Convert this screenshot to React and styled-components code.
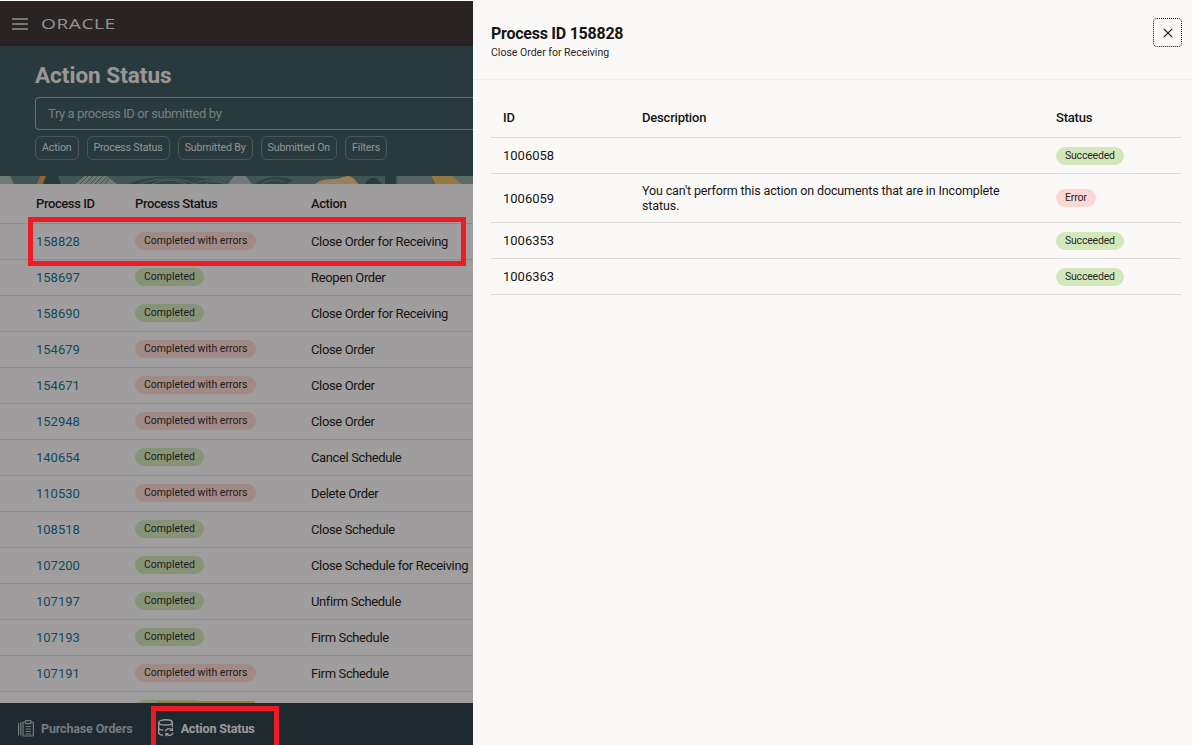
import React from "react";
import styled, { createGlobalStyle } from "styled-components";

const GlobalStyle = createGlobalStyle`
    html, body {
        margin: 0;
        padding: 0;
        background: #fff;
    }
    body {
        font-family: "Roboto", "Noto Sans", sans-serif;
        color: #161513;
    }
`;

const Page = styled.div`
    display: flex;
    width: 1192px;
    height: 745px;
    overflow: hidden;
    position: relative;
`;

const Left = styled.div`
    position: relative;
    display: flex;
    flex-direction: column;
    flex: 0 0 473px;
    height: 745px;
    overflow: hidden;
    padding-top: 1px;
    box-sizing: border-box;
    background: #fff;
`;

const Scrim = styled.div`
    position: absolute;
    inset: 1px 0 0 0;
    background: rgba(22, 21, 19, 0.4);
`;

const TopBar = styled.div`
    display: flex;
    align-items: center;
    gap: 13px;
    flex: 0 0 45px;
    padding-left: 12px;
    background: #36302d;
`;

const Logo = styled.span`
    font-family: "Open Sans", sans-serif;
    font-size: 14.5px;
    font-weight: 400;
    letter-spacing: 0.4px;
    color: #e8e6e4;
    transform: scaleX(1.32);
    transform-origin: left center;
`;

const Hero = styled.div`
    flex: 0 0 130px;
    box-sizing: border-box;
    padding: 15px 0 0 35px;
    background: #36545b;
`;

const Title = styled.h1`
    margin: 0 0 8px;
    font-size: 22.5px;
    line-height: 28px;
    font-weight: 700;
    color: #f1efed;
`;

const SearchBox = styled.div`
    display: flex;
    align-items: center;
    box-sizing: border-box;
    width: 520px;
    height: 33px;
    padding-left: 12px;
    border: 1px solid #9db0b0;
    border-radius: 4px;
    font-size: 13px;
    letter-spacing: -0.4px;
    color: #b9c4c4;
`;

const Chips = styled.div`
    display: flex;
    gap: 8px;
    margin-top: 6px;
`;

const Chip = styled.div`
    display: flex;
    align-items: center;
    box-sizing: border-box;
    height: 24px;
    padding: 0 6px 1px;
    border: 1px solid #6b8183;
    border-radius: 6px;
    font-size: 10.6px;
    letter-spacing: -0.15px;
    color: #dfe6e6;
    white-space: nowrap;
`;

const Strip = styled.svg`
    display: block;
    flex: 0 0 8px;
    width: 473px;
    height: 8px;
`;

const TableArea = styled.div`
    flex: 1;
    min-height: 0;
    overflow: hidden;
    background: #fbf9f8;
`;

const Row = styled.div`
    display: grid;
    grid-template-columns: 99px 176px 1fr;
    align-items: center;
    box-sizing: border-box;
    height: ${(p) => (p.$head ? "40px" : "36px")};
    padding: 0 0 1px 36px;
    border-bottom: 1px solid #dcdad8;
    font-size: 13px;
    white-space: nowrap;
    letter-spacing: ${(p) => (p.$head ? "-0.4px" : "-0.37px")};
    font-weight: ${(p) => (p.$head ? 500 : 400)};
`;

const IdLink = styled.a`
    color: #0f6f96;
    font-size: 13px;
    letter-spacing: 0;
`;

const Pill = styled.span`
    display: inline-flex;
    align-items: center;
    box-sizing: border-box;
    height: 18px;
    padding: 0 9px 1px;
    border-radius: 9px;
    font-size: 10.5px;
    letter-spacing: ${(p) => (p.$tight ? "-0.2px" : "0")};
    color: #2a2623;
    background: ${(p) => (p.$tone === "ok" ? "#d2e8ba" : "#fdd7d2")};
`;

const BottomBar = styled.div`
    position: relative;
    display: flex;
    align-items: center;
    flex: 0 0 42px;
    box-sizing: border-box;
    padding: 8px 0 0 18px;
    background: #233843;
`;

const Tab = styled.div`
    position: relative;
    display: flex;
    align-items: center;
    gap: 7px;
    margin-right: 25px;
    font-size: 12.5px;
    font-weight: 700;
    letter-spacing: -0.15px;
    color: ${(p) => (p.$active ? "#f4f2f0" : "#b4bfc4")};
    &::before {
        content: "";
        display: ${(p) => (p.$active ? "block" : "none")};
        position: absolute;
        left: -1px;
        right: 0;
        top: -18px;
        height: 2px;
        background: #e8c57a;
    }
`;

const Panel = styled.div`
    flex: 1;
    background: #fbf9f8;
    padding-top: 1px;
`;

const PanelHead = styled.div`
    display: flex;
    justify-content: space-between;
    box-sizing: border-box;
    height: 79px;
    padding: 17px 10px 0 18px;
    border-bottom: 1px solid #f0eeec;
`;

const PanelTitle = styled.div`
    font-size: 16px;
    line-height: 32px;
    font-weight: 700;
    letter-spacing: -0.25px;
`;

const PanelSub = styled.div`
    font-size: 10.5px;
    line-height: 6px;
    color: #2a2623;
`;

const CloseBtn = styled.button`
    display: flex;
    align-items: center;
    justify-content: center;
    box-sizing: border-box;
    width: 29px;
    height: 29px;
    padding: 0;
    border: 1px dotted #161513;
    border-radius: 4px;
    background: none;
`;

const DetailTable = styled.div`
    margin: 20px 11px 0 18px;
`;

const DetailRow = styled.div`
    display: grid;
    grid-template-columns: 139px 414px 1fr;
    align-items: center;
    box-sizing: border-box;
    min-height: ${(p) => (p.$head ? "38px" : "36px")};
    padding: 0 0 ${(p) => (p.$head ? "2px" : "0")} 12px;
    border-bottom: 1px solid #dedcda;
    font-size: 13px;
    letter-spacing: ${(p) => (p.$head ? "-0.2px" : "0")};
    font-weight: ${(p) => (p.$head ? 500 : 400)};
`;

const Description = styled.div`
    padding: 9px 0;
    width: 375px;
    font-size: 12.5px;
    line-height: 15px;
    letter-spacing: -0.13px;
`;

const rows = [
    ["158828", "err", "Close Order for Receiving"],
    ["158697", "ok", "Reopen Order"],
    ["158690", "ok", "Close Order for Receiving"],
    ["154679", "err", "Close Order"],
    ["154671", "err", "Close Order"],
    ["152948", "err", "Close Order"],
    ["140654", "ok", "Cancel Schedule"],
    ["110530", "err", "Delete Order"],
    ["108518", "ok", "Close Schedule"],
    ["107200", "ok", "Close Schedule for Receiving"],
    ["107197", "ok", "Unfirm Schedule"],
    ["107193", "ok", "Firm Schedule"],
    ["107191", "err", "Firm Schedule"],
    ["107190", "ok", "Firm Schedule"],
];

const details = [
    ["1006058", "", "Succeeded"],
    ["1006059", "You can't perform this action on documents that are in Incomplete status.", "Error"],
    ["1006353", "", "Succeeded"],
    ["1006363", "", "Succeeded"],
];

const RedBox = styled.div`
    position: absolute;
    box-sizing: border-box;
    border: 5px solid #ed1c24;
    pointer-events: none;
    left: ${(p) => p.$x}px;
    top: ${(p) => p.$y}px;
    width: ${(p) => p.$w}px;
    height: ${(p) => p.$h}px;
`;

function Burger() {
    return (
        <svg width="16" height="12" viewBox="0 0 16 12">
            <path d="M0 1h16M0 6h16M0 11h16" stroke="#e8e6e4" strokeWidth="1.6" />
        </svg>
    );
}

function OrdersIcon() {
    return (
        <svg width="16" height="17" viewBox="0 0 16 17" fill="none" stroke="#b4bfc4" strokeWidth="1.2">
            <path d="M.6 3v12.5M2.8 2v13.5" />
            <rect x="5" y="2" width="10.4" height="14" rx="1" />
            <rect x="7.5" y=".6" width="5.4" height="3" rx=".6" fill="#233843" />
            <path d="M7.5 6.5h5.4M7.5 9h5.4M7.5 11.5h5.4M7.5 14h5.4" />
        </svg>
    );
}

function StatusIcon() {
    return (
        <svg width="16" height="18" viewBox="0 0 16 18" fill="none" stroke="#f4f2f0" strokeWidth="1.4">
            <ellipse cx="7.5" cy="3.4" rx="6.8" ry="2.6" />
            <path d="M.7 3.4v10.4c0 1.3 1.8 2.2 4.3 2.5M14.3 3.4v4.4M.7 8.8c0 1.2 2 2.2 4.6 2.4" />
            <path d="M7.4 12.4a3.6 3.6 0 0 1 6.3-1.4M15 13.6a3.6 3.6 0 0 1-6.3 1.4" />
            <path d="M14.4 8.8v2.6h-2.6M8 17.2v-2.6h2.6" />
        </svg>
    );
}

function CloseIcon() {
    return (
        <svg width="10" height="10" viewBox="0 0 10 10">
            <path d="M.8.8l8.4 8.4M9.2.8L.8 9.2" stroke="#161513" strokeWidth="1.2" />
        </svg>
    );
}

function Leaves() {
    return (
        <Strip viewBox="0 0 473 8" preserveAspectRatio="none">
            <rect width="473" height="8" fill="#5f8180" />
            <path d="M0 0h10l4 8H0z" fill="#a9bdbb" />
            <path d="M40 0h6l-3 8h-6z" fill="#e8954a" />
            <path d="M46 0h12l3 8H43z" fill="#2f5557" />
            <path d="M75 8l10-8h22l10 8z" fill="#a9bdbb" />
            <path d="M80 8l8-8M85 8l8-8M90 8l8-8M95 8l8-8M100 8l8-8M105 8l6-8" stroke="#5f8180" strokeWidth="1" />
            <path d="M128 8c20-10 70-10 107 0z" fill="#3d6466" />
            <path d="M140 8c15-7 40-7 55 0M152 8c10-5 24-5 34 0M195 8c8-5 20-5 34 0M205 8c6-3 12-3 20 0" fill="none" stroke="#6d9291" strokeWidth="1" />
            <path d="M228 8l6-8h12l6 8z" fill="#a9bdbb" />
            <path d="M255 8c8-8 28-9 38-4l-6 4z" fill="#3d6466" />
            <path d="M262 8c6-5 16-5 22-2" fill="none" stroke="#6d9291" strokeWidth="1" />
            <path d="M315 8c4-4 12-5 20-5 6 0 9-3 13-3 5 0 8 6 11 8z" fill="#f0c98a" />
            <path d="M365 8l5-6h6l6 6z" fill="#2f5557" />
            <rect x="385" width="11" height="8" fill="#2f5557" />
            <path d="M397 0h34l3 8h-36z" fill="#7d9a98" />
            <path d="M431 0h22l9 8h-27z" fill="#e8b85f" />
            <path d="M453 0h20v8h-11z" fill="#8ba6a4" />
        </Strip>
    );
}

export default function App() {
    return (
        <Page>
            <GlobalStyle />
            <Left>
                <TopBar>
                    <Burger />
                    <Logo>ORACLE</Logo>
                </TopBar>
                <Hero>
                    <Title>Action Status</Title>
                    <SearchBox>Try a process ID or submitted by</SearchBox>
                    <Chips>
                        {["Action", "Process Status", "Submitted By", "Submitted On", "Filters"].map((c) => (
                            <Chip key={c}>{c}</Chip>
                        ))}
                    </Chips>
                </Hero>
                <Leaves />
                <TableArea>
                    <Row $head>
                        <span>Process ID</span>
                        <span>Process Status</span>
                        <span>Action</span>
                    </Row>
                    {rows.map((r) => (
                        <Row key={r[0]}>
                            <IdLink>{r[0]}</IdLink>
                            <span>
                                <Pill $tone={r[1]}>{r[1] === "ok" ? "Completed" : "Completed with errors"}</Pill>
                            </span>
                            <span>{r[2]}</span>
                        </Row>
                    ))}
                </TableArea>
                <BottomBar>
                    <Tab>
                        <OrdersIcon />
                        Purchase Orders
                    </Tab>
                    <Tab $active>
                        <StatusIcon />
                        Action Status
                    </Tab>
                </BottomBar>
                <Scrim />
            </Left>
            <Panel>
                <PanelHead>
                    <div>
                        <PanelTitle>Process ID 158828</PanelTitle>
                        <PanelSub>Close Order for Receiving</PanelSub>
                    </div>
                    <CloseBtn>
                        <CloseIcon />
                    </CloseBtn>
                </PanelHead>
                <DetailTable>
                    <DetailRow $head>
                        <span>ID</span>
                        <span>Description</span>
                        <span>Status</span>
                    </DetailRow>
                    {details.map((d) => (
                        <DetailRow key={d[0]}>
                            <span>{d[0]}</span>
                            {d[1] ? <Description>{d[1]}</Description> : <span />}
                            <span>
                                <Pill $tight $tone={d[2] === "Error" ? "err" : "ok"}>{d[2]}</Pill>
                            </span>
                        </DetailRow>
                    ))}
                </DetailTable>
            </Panel>
            <RedBox $x={28} $y={217} $w={438} $h={49} />
            <RedBox $x={151} $y={706} $w={128} $h={44} />
        </Page>
    );
}
